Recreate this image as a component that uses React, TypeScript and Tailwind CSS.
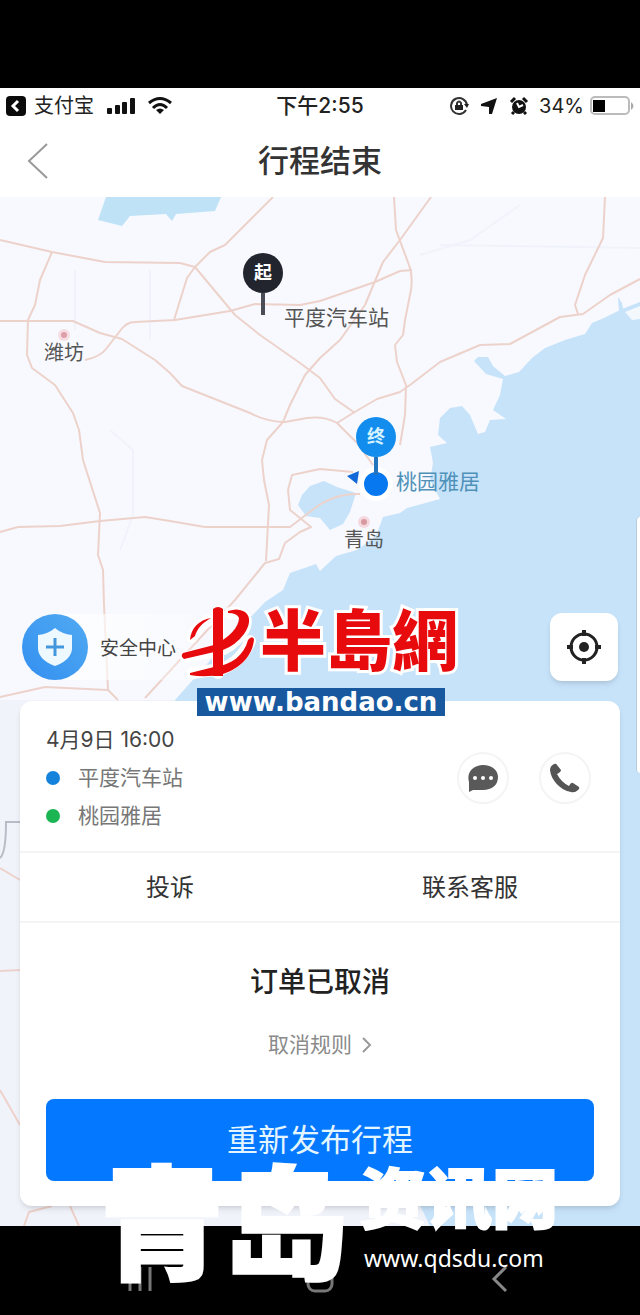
import type { ReactNode } from "react";

const ROADS = [
  "M0 240 L52 252 L105 262 L180 263 L195 267 L235 315 L260 335 L300 363 L320 378 L335 399 L355 413",
  "M273 197 L255 215 L225 245 L210 252 L195 267 L187 278 L174 320",
  "M0 321 L73 321 L100 333 L122 339 L155 360 L170 373 L182 386 L250 413 Q267 422 285 422 L307 418 Q325 416 337 423 L353 413 L377 399 L400 392 L410 385 L440 362 L480 345 L510 344 L560 317 L583 314 L610 295 L640 279",
  "M337 423 L357 443 L373 465",
  "M52 252 L40 280 L35 305 L28 320 L27 355 L32 368 L55 385 L73 413 L79 430 L83 460 L100 513 L98 555 L103 570 L104 605 L108 690 L118 700",
  "M85 360 Q100 357 106 349 L120 331 Q126 322 135 322 L175 320 L230 311 L255 304 L300 305 L320 301 L375 282 L400 271 L412 270",
  "M394 197 L396 230 L409 265 Q413 275 411 290 L405 320 L403 335 L395 345 L397 362 L406 385 L405 415 L400 445",
  "M431 197 L400 240 L383 262 L365 305 L340 340 L320 358 L305 375 L290 405 L283 422 L267 440 L262 460 L264 480 L269 505 L266 561",
  "M605 197 L603 238 L585 275 L575 305 L578 314",
  "M0 532 L18 527 L60 526 L100 521 L145 517 L170 521 L205 527 L290 527 L315 508 Q335 493 360 494",
  "M353 472 L320 469 L292 475 L288 490 L290 510 L300 518 L311 527 L300 532 L285 543 L279 559 L265 563 L235 600 L145 698",
  "M0 697 L45 687 L108 690",
  "M0 868 L20 880",
  "M0 971 L20 970",
  "M0 1090 L20 1125",
  "M24 1226 L29 1212 L52 1206 M70 1206 L79 1226",
];

const SEA =
  "M640 302 L622 309 L604 318 L592 323 L585 334 L565 340 L545 348 L532 358 L519 372 L505 376 L493 366 L488 357 L478 357 L474 361 L486 374 L503 379 L500 395 L493 410 L506 419 L490 420 L485 432 L478 434 L470 415 L462 406 L450 408 L440 418 L438 435 L447 443 L430 447 L433 463 L430 480 L440 499 L407 508 L400 513 L383 517 L376 536 L357 550 L336 556 L320 571 L316 564 L290 573 L283 590 L265 602 L215 655 L175 700 L430 1226 L640 1226 Z";

function RouteMap() {
  return (
    <svg
      className="absolute inset-0 h-full w-full"
      viewBox="0 197 640 1029"
      preserveAspectRatio="xMidYMin slice"
      aria-hidden="true"
    >
      <rect y="197" width="640" height="1029" fill="#f7f9fe" />
      <rect y="700" width="430" height="526" fill="#f1f3fb" />
      <path
        d="M75 270 V330 M150 270 V340 M110 430 L133 450 V515 L120 550 M420 255 L470 240 L520 205 M440 245 L640 248"
        fill="none"
        stroke="#f0f3fb"
        strokeWidth="2"
      />
      <path d={SEA} fill="#c7e3fa" />
      <path d="M106 197 H221 L215 211 L176 214 L172 221 L166 214 L130 216 L122 226 L98 220 Z" fill="#bfe2f7" />
      <path d="M298 505 L302 495 L310 486 L324 481 L337 487 L356 493 L350 512 L343 524 L330 530 L320 518 L306 516 Z" fill="#c7e3fa" />
      <path d="M618 297 L622 303 L624 314 L619 312 Z" fill="#c7e3fa" />
      <path d="M640 306 L625 312 L632 320 L640 319 Z" fill="#f3f8fd" />
      {ROADS.map((d) => (
        <path key={d} d={d} fill="none" stroke="#edd2cb" strokeWidth="2" strokeLinejoin="round" />
      ))}
      <path d="M0 858 Q6 853 6 822 H20" fill="none" stroke="#b9bcc6" strokeWidth="2" />
      <circle cx="64" cy="335" r="6" fill="#f5dde2" />
      <circle cx="64" cy="335" r="3" fill="#dc9faa" />
      <circle cx="364" cy="522" r="6" fill="#f3d9de" />
      <circle cx="364" cy="522" r="3" fill="#d8989f" />
      <path d="M347 476 L359 471 L357 484 Z" fill="#1268d6" />
    </svg>
  );
}

function StatusBar() {
  return (
    <div className="grid h-9 grid-cols-3 items-center bg-white px-[6px] text-xl text-[#222]">
      <div className="flex items-center gap-2">
        <svg className="h-5 w-5" viewBox="0 0 20 20" aria-hidden="true">
          <rect width="20" height="20" rx="4" fill="#0b0b0b" />
          <path d="M12 5 L7 10 L12 15" fill="none" stroke="#fff" strokeWidth="3" />
        </svg>
        <span>支付宝</span>
        <svg className="ml-1 h-5 w-[30px]" viewBox="0 0 30 20" fill="#111" aria-hidden="true">
          <rect x="1" y="12" width="5" height="6" rx="1" />
          <rect x="9" y="9" width="5" height="9" rx="1" />
          <rect x="16" y="6" width="5" height="12" rx="1" />
          <rect x="24" y="2" width="5" height="16" rx="1" />
        </svg>
        <svg className="ml-1 h-5 w-6" viewBox="0 0 24 20" fill="none" stroke="#111" strokeWidth="3" aria-hidden="true">
          <path d="M1 7 Q12 -2 23 7" />
          <path d="M5 12 Q12 5 19 12" />
          <path d="M8 14 Q12 11 16 14 L12 18 Z" fill="#111" stroke="none" />
        </svg>
      </div>
      <div className="text-center text-[21px] font-medium">下午2:55</div>
      <div className="flex items-center justify-end gap-[6px]">
        <svg className="h-5 w-5" viewBox="0 0 20 20" fill="none" stroke="#333" strokeWidth="2" aria-hidden="true">
          <path d="M17 14 A8 8 0 1 1 18 9" />
          <path d="M15 8 H20 L18 12 Z" fill="#222" stroke="none" />
          <rect x="6" y="9" width="8" height="5" fill="#222" stroke="none" />
          <path d="M8 9 V7 Q10 4 12 7 V9" />
        </svg>
        <svg className="ml-1 h-5 w-5" viewBox="0 0 20 20" aria-hidden="true">
          <path d="M18 2 L13 18 L10 18 L10 11 L2 10 L2 8 Z" fill="#111" />
        </svg>
        <svg className="ml-1 h-5 w-5" viewBox="0 0 20 20" aria-hidden="true">
          <circle cx="10" cy="11" r="7" fill="#111" />
          <path d="M2 6 L6 2 M18 6 L14 2 M5 16 L3 18 M15 16 L17 18" stroke="#111" strokeWidth="3" />
          <path d="M8 7 L10 11 L14 9" fill="none" stroke="#fff" strokeWidth="2" />
        </svg>
        <span className="ml-1">34%</span>
        <svg className="h-5 w-11" viewBox="0 0 44 20" aria-hidden="true">
          <rect x="1" y="1" width="38" height="17" rx="4" fill="#fff" stroke="#bbb" strokeWidth="2" />
          <rect x="3" y="4" width="12" height="12" fill="#000" />
          <path d="M41 6 Q46 10 41 14 Z" fill="#aaa" />
        </svg>
      </div>
    </div>
  );
}

function RoundButton({ label, children }: { label: string; children: ReactNode }) {
  return (
    <button
      type="button"
      aria-label={label}
      className="flex h-[52px] w-[52px] items-center justify-center rounded-full border-2 border-[#f4f4f4] bg-white"
    >
      {children}
    </button>
  );
}

function TripCard() {
  return (
    <section className="mx-5 mt-5 rounded-xl bg-white text-[#333] shadow-md">
      <div className="flex h-[150px] items-center justify-between px-[26px] pt-1">
        <div>
          <p className="text-[21px] leading-[38px] text-[#444]">4月9日 16:00</p>
          <p className="flex items-center gap-[18px] text-[21px] leading-[38px] text-[#777]">
            <span className="h-[14px] w-[14px] rounded-full bg-[#1583dc]" />
            平度汽车站
          </p>
          <p className="flex items-center gap-[18px] text-[21px] leading-[38px] text-[#777]">
            <span className="h-[14px] w-[14px] rounded-full bg-[#1bb554]" />
            桃园雅居
          </p>
        </div>
        <div className="flex gap-[30px] pr-[3px]">
          <RoundButton label="消息">
            <svg className="h-8 w-8" viewBox="0 0 32 32" aria-hidden="true">
              <path d="M16 3 C25 3 31 8 31 15 C31 23 25 28 16 28 H6 L2 30 L2 20 C-1 10 7 3 16 3 Z" fill="#595959" />
              <circle cx="8" cy="16" r="2" fill="#fff" />
              <circle cx="16" cy="16" r="2" fill="#fff" />
              <circle cx="24" cy="16" r="2" fill="#fff" />
            </svg>
          </RoundButton>
          <RoundButton label="电话">
            <svg className="h-8 w-8" viewBox="0 0 32 32" aria-hidden="true">
              <path
                d="M5 2 Q7 1 8 3 L12 8 Q12 10 8 12 Q12 20 20 24 Q22 20 24 21 L30 25 Q31 27 29 28 Q26 31 22 30 C11 28 2 18 1 8 Q1 4 5 2 Z"
                fill="#555"
              />
            </svg>
          </RoundButton>
        </div>
      </div>
      <div className="grid h-[72px] grid-cols-2 border-y-2 border-[#f4f4f4] pt-[2px] text-2xl">
        <button type="button">投诉</button>
        <button type="button">联系客服</button>
      </div>
      <div className="px-[26px] pt-[38px] pb-[25px] text-center">
        <h2 className="text-[28px] leading-[42px] font-medium text-[#222]">订单已取消</h2>
        <a href="#rules" className="mt-[26px] inline-flex items-center gap-2 text-[21px] leading-8 text-[#8a8a8a]">
          取消规则
          <svg className="h-4 w-3" viewBox="0 0 12 16" fill="none" stroke="#999" strokeWidth="2" aria-hidden="true">
            <path d="M3 1 L10 8 L3 15" />
          </svg>
        </a>
        <button
          type="button"
          className="mt-[38px] block h-[82px] w-full rounded-lg bg-[#0478ff] text-[31px] text-[#e3f5ff]"
        >
          重新发布行程
        </button>
      </div>
    </section>
  );
}

function BandaoLogo() {
  return (
    <div className="pointer-events-none absolute top-[396px] left-[182px]">
      <div className="flex h-[95px] items-center gap-2">
        <svg className="h-[84px] w-[70px] overflow-visible" viewBox="0 0 70 84" aria-hidden="true">
          <g fill="none" stroke="#fff" strokeLinecap="round" strokeLinejoin="round" strokeWidth="12">
            <path d="M36 12 V74 M10 38 Q16 26 26 22 M48 14 H56 C74 18 58 42 42 50 L4 58 M10 74 L40 70 Q60 62 68 42" />
          </g>
          <g fill="#e80b0d">
            <path d="M31 10 Q36 6 41 10 V77 H31 Z" />
            <path d="M8 41 C9 29 17 21 29 19 C20 24 15 30 13 37 Z" />
            <path d="M46 12 Q55 9 61 12 C70 16 68 27 62 35 Q54 46 41 51 L2 60 Q-2 57 1 54 L32 46 C47 39 57 28 57 19 Q55 14 46 14 Z" />
            <path d="M8 74 L32 68 C50 66 62 56 66 41 Q70 36 72 40 C71 56 59 69 41 75 Q24 79 8 76 Z" />
          </g>
        </svg>
        <p className="text-[66px] leading-[88px] font-black text-[#e80b0d] [paint-order:stroke] [-webkit-text-stroke:6px_white]">
          半島網
        </p>
      </div>
      <p className="ml-[15px] flex h-7 w-[248px] items-center justify-center bg-[#17589f] font-['DejaVu_Sans'] text-[26px] font-bold text-white">
        www.bandao.cn
      </p>
    </div>
  );
}

function QingdaoLogo() {
  return (
    <div className="pointer-events-none absolute bottom-6 left-[100px] flex text-white">
      <p className="text-[124px] leading-[132px] font-black [-webkit-text-stroke:2px_white]">青岛</p>
      <div className="ml-3 pt-1">
        <p className="text-[66px] leading-[72px] font-black [-webkit-text-stroke:2px_white]">资讯网</p>
        <p className="ml-1 font-['Noto_Sans'] text-[23px] leading-[46px]">www.qdsdu.com</p>
      </div>
    </div>
  );
}

export default function App() {
  return (
    <div className="relative flex min-h-screen flex-col overflow-hidden bg-black font-['Inter','Noto_Sans_CJK_SC',sans-serif]">
      <div className="h-[88px]" />
      <StatusBar />
      <header className="grid h-[73px] grid-cols-3 items-center bg-white px-6">
        <button type="button" aria-label="返回" className="w-7">
          <svg className="h-9 w-7" viewBox="0 0 28 36" fill="none" stroke="#999" strokeWidth="2" aria-hidden="true">
            <path d="M23 1 L5 18 L23 35" />
          </svg>
        </button>
        <h1 className="pt-[2px] text-center text-[31px] font-medium whitespace-nowrap text-[#333]">行程结束</h1>
      </header>

      <main className="relative flex-1 pb-5">
        <RouteMap />
        <div className="relative h-[416px] text-[21px] leading-8 text-[#555]">
          <div className="absolute top-[56px] left-[243px] flex flex-col items-center">
            <span className="flex h-10 w-10 items-center justify-center rounded-full bg-[#22252e] text-lg font-bold text-white">起</span>
            <span className="h-[22px] w-1 bg-[#4a4d55]" />
          </div>
          <span className="absolute top-[105px] left-[284px]">平度汽车站</span>
          <span className="absolute top-[140px] left-11 text-xl leading-8">潍坊</span>
          <div className="absolute top-[220px] left-[356px] flex flex-col items-center">
            <span className="flex h-10 w-10 items-center justify-center rounded-full bg-[#138ded] text-lg font-bold text-[#d6f2ff]">终</span>
            <span className="relative z-10 h-[18px] w-1 bg-[#2374bd]" />
            <span className="-mt-2 h-[34px] w-[34px] rounded-full border-5 border-white bg-[#0878f0]" />
          </div>
          <span className="absolute top-[269px] left-[396px] text-[#4f91b8]">桃园雅居</span>
          <span className="absolute top-[327px] left-[344px] text-xl leading-8">青岛</span>
        </div>
        <div className="relative flex items-center justify-between px-[22px]">
          <button type="button" className="flex items-center rounded-l-full bg-linear-to-r from-white to-white/20 pr-5 text-[19px] text-[#444]">
            <span className="flex h-[66px] w-[66px] items-center justify-center rounded-full bg-linear-to-tr from-[#338ff0] to-[#51aaf2]">
              <svg className="h-10 w-9" viewBox="0 0 36 40" aria-hidden="true">
                <path d="M18 1 Q25 7 35 8 V22 Q34 33 18 39 Q2 33 1 22 V8 Q11 7 18 1 Z" fill="#edf8ff" />
                <path d="M18 11 V29 M9 20 H27" stroke="#4597dd" strokeWidth="3" />
              </svg>
            </span>
            <span className="ml-3 pt-1">安全中心</span>
          </button>
          <button type="button" aria-label="定位" className="flex h-[68px] w-[68px] items-center justify-center rounded-xl bg-white shadow-md">
            <svg className="h-9 w-9" viewBox="0 0 36 36" fill="none" stroke="#222" aria-hidden="true">
              <circle cx="18" cy="18" r="13" strokeWidth="3" />
              <circle cx="18" cy="18" r="5" fill="#222" stroke="none" />
              <path d="M18 1 V7 M18 29 V35 M1 18 H7 M29 18 H35" strokeWidth="4" />
            </svg>
          </button>
        </div>
        <div className="relative">
          <TripCard />
        </div>
        <div className="absolute top-[320px] right-0 h-[256px] w-1 rounded-l-md border-l border-[#b6cee0] bg-white" />
        <BandaoLogo />
      </main>

      <nav className="flex h-[89px] items-center justify-around px-[50px] pt-4">
        <button type="button" aria-label="最近任务">
          <svg className="h-7 w-7" viewBox="0 0 28 28" stroke="#777" strokeWidth="3" aria-hidden="true">
            <path d="M4 2 V26 M14 2 V26 M24 2 V26" />
          </svg>
        </button>
        <button type="button" aria-label="主屏幕">
          <svg className="h-7 w-7" viewBox="0 0 28 28" fill="none" stroke="#777" strokeWidth="3" aria-hidden="true">
            <rect x="2" y="2" width="24" height="24" rx="7" />
          </svg>
        </button>
        <button type="button" aria-label="后退">
          <svg className="h-7 w-7" viewBox="0 0 28 28" fill="none" stroke="#888" strokeWidth="3" aria-hidden="true">
            <path d="M20 2 L8 14 L20 26" />
          </svg>
        </button>
      </nav>
      <QingdaoLogo />
    </div>
  );
}
